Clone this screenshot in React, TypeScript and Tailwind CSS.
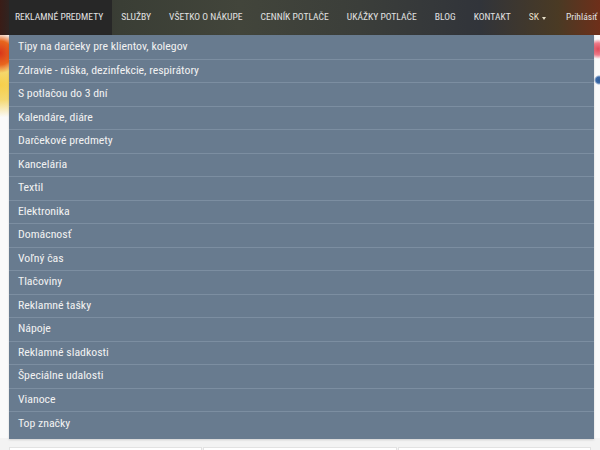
import React from "react";

const navItems = [
  { label: "REKLAMNÉ PREDMETY", active: true },
  { label: "SLUŽBY" },
  { label: "VŠETKO O NÁKUPE" },
  { label: "CENNÍK POTLAČE" },
  { label: "UKÁŽKY POTLAČE" },
  { label: "BLOG" },
  { label: "KONTAKT" },
];

const categories = [
  "Tipy na darčeky pre klientov, kolegov",
  "Zdravie - rúška, dezinfekcie, respirátory",
  "S potlačou do 3 dní",
  "Kalendáre, diáre",
  "Darčekové predmety",
  "Kancelária",
  "Textil",
  "Elektronika",
  "Domácnosť",
  "Voľný čas",
  "Tlačoviny",
  "Reklamné tašky",
  "Nápoje",
  "Reklamné sladkosti",
  "Špeciálne udalosti",
  "Vianoce",
  "Top značky",
];

const font = {
  fontFamily:
    '"Liberation Sans Narrow", "Roboto Condensed", "DejaVu Sans Condensed", Roboto, sans-serif',
};

export default function App() {
  return (
    <div className="relative w-[600px] h-[450px] overflow-hidden bg-[#f3f3f3]" style={font}>
      {/* top navigation */}
      <header className="h-[35px] flex items-stretch pl-[9px] bg-[linear-gradient(90deg,#3a1c16_0%,#2c2624_2%,#3a3e35_20%,#42453b_40%,#3b3e3a_60%,#31343a_80%,#4a3a24_93%,#6e2f1a_100%)]">
        {navItems.map((n, i) => (
          <a
            key={n.label}
            className={`flex items-center text-[9.6px] text-[#e2e2e2] whitespace-nowrap ${
              i === 0 ? "pl-[6px] pr-[9px]" : "px-[9px]"
            } ${n.active ? "bg-[#272727]" : ""}`}
          >
            {n.label}
          </a>
        ))}
        <a className="flex items-center gap-[3px] px-[9px] text-[9.6px] text-[#e6dfc8] whitespace-nowrap">
          SK
          <span className="block w-0 h-0 border-x-[2.5px] border-x-transparent border-t-[3px] border-t-[#e6dfc8] mt-[2px]" />
        </a>
        <a className="flex items-center pl-[11px] text-[9.6px] text-[#e2e2e2] whitespace-nowrap">
          Prihlásiť
        </a>
      </header>

      {/* page body under the menu */}
      <div className="h-[403px] bg-[#fafafa] bg-[radial-gradient(circle_at_0px_18px,#d8361a_0,#e8661e_12px,transparent_20px),radial-gradient(ellipse_at_0px_50px,#f7cf4a_0,#f4d870_25px,transparent_55px),radial-gradient(circle_at_598px_14px,#e04a5a_0,#f07a8a_6px,transparent_10px),radial-gradient(circle_at_599px_45px,#2f5d9a_0,#3c6aa8_3px,transparent_5px)]" />
      <div className="flex gap-[1px] px-[9px] pt-[9px]">
        <div className="flex-1 h-[20px] bg-white border border-[#e2e2e2]" />
        <div className="flex-1 h-[20px] bg-white border border-[#e2e2e2]" />
        <div className="flex-1 h-[20px] bg-white border border-[#e2e2e2]" />
      </div>

      {/* dropdown menu */}
      <ul className="absolute left-[9px] top-[35px] w-[585px] bg-[#687b8f] pt-[1px] pb-[3px] shadow-[0_1px_2px_rgba(0,0,0,0.15)]">
        {categories.map((c, i) => (
          <li
            key={c}
            className={`h-[23.5px] flex items-center pl-[9px] text-[11.8px] text-[#f2f2f2] ${
              i < categories.length - 1 ? "border-b border-[#7c8ea1]" : ""
            }`}
          >
            {c}
          </li>
        ))}
      </ul>
    </div>
  );
}
